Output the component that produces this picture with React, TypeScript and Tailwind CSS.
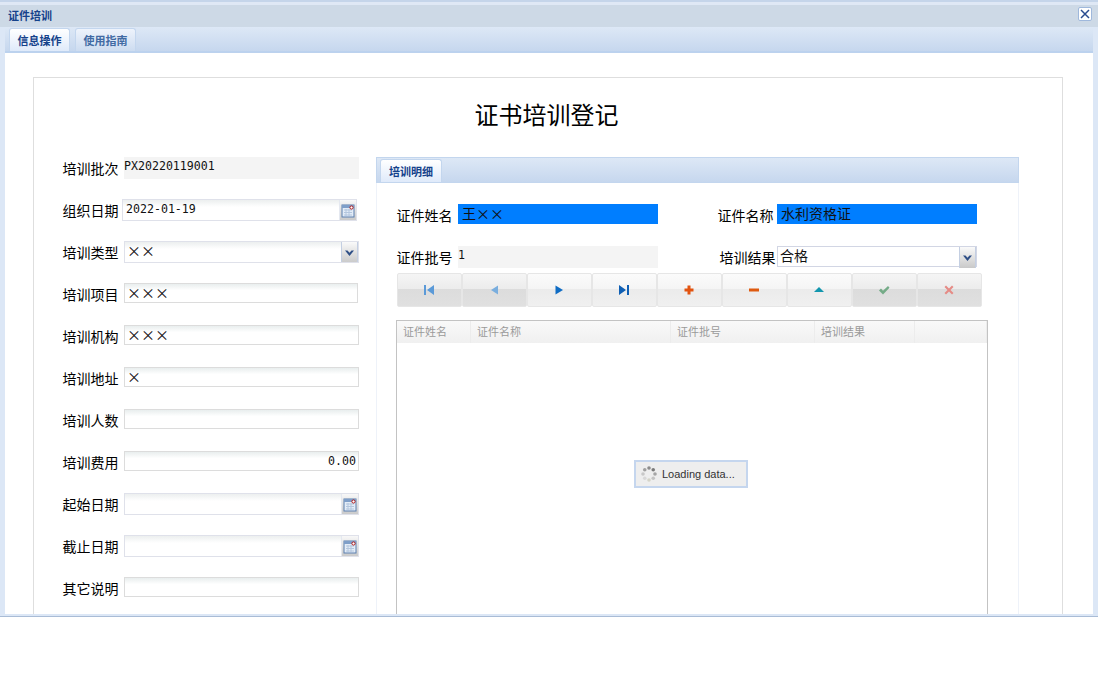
const cjk = { fontFamily: "'Noto Sans CJK SC', sans-serif" };
const mono = { fontFamily: "'DejaVu Sans Mono', 'Noto Sans CJK SC', monospace" };

function CalendarIcon() {
  return (
    <span className="flex h-[21px] w-[17px] shrink-0 items-center justify-center border-l border-[#e4e8f0] bg-gradient-to-b from-[#f8f8f8] to-[#c8c8c8]">
      <svg width="14" height="14" viewBox="0 0 14 14">
        <rect x="1" y="1" width="12" height="12" fill="#e3ecf7" stroke="#5b7fae" />
        <rect x="1" y="1" width="12" height="3" fill="#7f9fc9" />
        <path d="M3 6h8M3 8.5h8M3 11h8M5 5v7M8 5v7" stroke="#b3c6de" strokeWidth="1" />
        <circle cx="10.5" cy="3.5" r="1.6" fill="#fff" stroke="#b01818" />
      </svg>
    </span>
  );
}

function ComboArrow() {
  return (
    <span className="flex h-[21px] w-[17px] shrink-0 items-center justify-center border-x border-[#c4cfe2] bg-gradient-to-b from-[#fafafa] to-[#c9c9c9]">
      <svg width="9" height="6" viewBox="0 0 9 6">
        <path d="M0 0.5h2.5L4.5 2.8 6.5 0.5H9L4.5 6z" fill="#2f4f86" />
      </svg>
    </span>
  );
}

type Field = {
  label: string;
  value?: string;
  kind: "readonly" | "date" | "combo" | "text";
  offset?: string;
  numeric?: boolean;
  latin?: boolean;
};

const fields: Field[] = [
  { label: "培训批次", value: "PX20220119001", kind: "readonly", latin: true },
  { label: "组织日期", value: "2022-01-19", kind: "date", offset: "-ml-[2px] w-[235px]", latin: true },
  { label: "培训类型", value: "××", kind: "combo" },
  { label: "培训项目", value: "×××", kind: "text", offset: "w-[234px]" },
  { label: "培训机构", value: "×××", kind: "text" },
  { label: "培训地址", value: "×", kind: "text" },
  { label: "培训人数", kind: "text" },
  { label: "培训费用", value: "0.00", kind: "text", numeric: true, latin: true },
  { label: "起始日期", kind: "date" },
  { label: "截止日期", kind: "date" },
  { label: "其它说明", kind: "text" },
];

function FormRow({ field }: { field: Field }) {
  const { label, value, kind, offset, numeric, latin } = field;
  const box =
    kind === "readonly"
      ? "h-[22px] bg-[#f4f4f4]"
      : kind === "text"
        ? "h-[20px] border border-[#dcdcdc] bg-gradient-to-b from-[#e9eeee] to-white to-[35%]"
        : "h-[22px] border border-[#dfe1ea] bg-gradient-to-b from-[#ecefef] to-white to-[35%]";
  const text = latin
    ? `text-[11.6px] leading-[18px] ${kind === "readonly" ? "pl-0" : "pl-[3px] pr-[2px]"}`
    : "px-[2px] text-[14px] leading-[16px]";
  return (
    <div className="flex h-[42px] items-start">
      <span className="-ml-[0.5px] w-[61.5px] shrink-0 text-[14px] leading-[22px] text-black" style={cjk}>
        {label}
      </span>
      <div className={`flex ${box} ${offset ?? "w-[235px]"} overflow-hidden`}>
        <span
          className={`min-w-0 flex-1 whitespace-nowrap ${text} text-[#111] ${numeric ? "text-right" : ""}`}
          style={latin ? mono : cjk}
        >
          {value}
        </span>
        {kind === "date" && <CalendarIcon />}
        {kind === "combo" && <ComboArrow />}
      </div>
    </div>
  );
}

const toolIcons = [
  { on: false, d: "M1 1h2v10H1zM11 1v10L4 6z", fill: "#5b9ad8" },
  { on: false, d: "M10 1.5v9L3 6z", fill: "#7aaede" },
  { on: true, d: "M2.5 1.5v9L10 6z", fill: "#0f6cc4" },
  { on: true, d: "M1 1v10l7-5zM9 1h2v10H9z", fill: "#0f5fb4" },
  { on: true, d: "M4.5 1.5h3v3h3v3h-3v3h-3v-3h-3v-3h3z", fill: "#e2530f" },
  { on: true, d: "M1 4.5h10v3H1z", fill: "#de5a10" },
  { on: true, d: "M6 3l5 5H1z", fill: "#1196ae" },
  { on: false, d: "M1 6.5l2-2 2 2.2L10 2l1.5 1.8L5 10.5z", fill: "#74ab87" },
  { on: false, d: "M1.5 3L3 1.5l3 3 3-3L10.5 3l-3 3 3 3L9 10.5l-3-3-3 3L1.5 9l3-3z", fill: "#e58b86" },
];

function ToolButton({ on, d, fill }: { on: boolean; d: string; fill: string }) {
  return (
    <div
      className={`flex h-[34px] w-[65px] items-center justify-center rounded-[2px] border border-[#e6e6e6] pr-[2px] ${
        on
          ? "bg-[linear-gradient(#fbfbfb,#f4f4f4_48%,#ebebeb_48%,#f0f0f0)]"
          : "bg-[linear-gradient(#f5f5f5,#ececec_48%,#dcdcdc_48%,#e0e0e0)]"
      }`}
    >
      <svg width="12" height="12" viewBox="0 0 12 12">
        <path d={d} fill={fill} />
      </svg>
    </div>
  );
}

const columns = [
  { title: "证件姓名", w: "w-[74px]" },
  { title: "证件名称", w: "w-[200px]" },
  { title: "证件批号", w: "w-[144px]" },
  { title: "培训结果", w: "w-[100px]" },
  { title: "", w: "flex-1" },
];

function Spinner() {
  const dots = [0, 45, 90, 135, 180, 225, 270, 315];
  const shades = ["#8c8c8c", "#7a7a7a", "#a5a5a5", "#c4c4c4", "#d4d4c8", "#d8d8d8", "#c8c8c8", "#a0a0a0"];
  return (
    <svg width="16" height="16" viewBox="0 0 16 16">
      {dots.map((a, i) => (
        <circle
          key={a}
          cx={8 + 6 * Math.sin((a * Math.PI) / 180)}
          cy={8 - 6 * Math.cos((a * Math.PI) / 180)}
          r="1.8"
          fill={shades[i]}
        />
      ))}
    </svg>
  );
}

function Tab({ label, active, width }: { label: string; active?: boolean; width: string }) {
  return (
    <div
      className={`flex h-[23px] ${width} items-center justify-center rounded-t-[3px] border border-b-0 border-[#c3d6ee] text-[11px] font-bold ${
        active ? "bg-gradient-to-b from-white to-[#dfeafa] text-[#15428b]" : "bg-gradient-to-b from-[#eef3fb] to-[#cddcf0] text-[#416aa3]"
      }`}
      style={cjk}
    >
      {label}
    </div>
  );
}

export default function App() {
  return (
    <div className="h-[687px] w-[1100px] overflow-hidden bg-white" style={cjk}>
      <div className="flex h-[617px] w-[1098px] flex-col border-b border-[#a9bcd6] bg-[#dce7f6]">
        {/* window title */}
        <div className="flex h-[27px] shrink-0 items-center justify-between bg-[linear-gradient(#c5d5ea_2px,#dfe8f5_2px,#dfe8f5_5px,#cdd9e6_5px)] pl-[8px] pr-[6px] pt-[1px]">
          <span className="mt-[3px] text-[11px] font-bold text-[#15428b]">证件培训</span>
          <span className="flex h-[14px] w-[14px] items-center justify-center rounded-[2px] border border-[#9fb8dc] bg-white">
            <svg width="10" height="10" viewBox="0 0 10 10">
              <path d="M1 1l8 8M9 1l-8 8" stroke="#2a4c8f" strokeWidth="1.5" />
            </svg>
          </span>
        </div>

        <div className="flex min-h-0 flex-1 flex-col px-[5px] pb-[2px]">
          {/* top tabs */}
          <div className="flex h-[26px] shrink-0 items-end gap-[5px] border-b-2 border-[#bcd2ee] bg-gradient-to-b from-[#dde8f6] to-[#c6d7ee] pl-[4px]">
            <Tab label="信息操作" active width="w-[61px]" />
            <Tab label="使用指南" width="w-[61px]" />
          </div>

          <div className="min-h-0 flex-1 overflow-hidden bg-white px-[28px] pt-[24px]">
            <div className="h-[600px] w-[1030px] border border-[#dedede]">
              <h1 className="mt-[19px] h-[60px] pr-[3px] text-center text-[24px] font-normal leading-[34px] text-black">证书培训登记</h1>

              <div className="flex pl-[29px]">
                <div className="w-[296px] shrink-0">
                  {fields.map((f) => (
                    <FormRow key={f.label} field={f} />
                  ))}
                </div>

                {/* detail panel */}
                <div className="ml-[17px] w-[643px] shrink-0">
                  <div className="flex h-[26px] items-end border border-[#c3d6ee] bg-gradient-to-b from-[#dde8f6] to-[#c6d7ee] pl-[3px]">
                    <Tab label="培训明细" active width="w-[62px]" />
                  </div>

                  <div className="border-x border-[#eef2f9] pl-[20px] pt-[21px]">
                    <div className="flex h-[42px] items-start">
                      <span className="-ml-[0.5px] w-[61.5px] text-[14px] leading-[22px]">证件姓名</span>
                      <span className="h-[20px] w-[200px] bg-[#007eff] px-[4px] text-[14px] leading-[19px] text-[#111]">王××</span>
                      <span className="ml-[59.5px] w-[59.5px] whitespace-nowrap text-[14px] leading-[22px]">证件名称</span>
                      <span className="h-[20px] w-[200px] bg-[#007eff] px-[4px] text-[14px] leading-[19px] text-[#111]">水利资格证</span>
                    </div>

                    <div className="flex h-[27px] items-start">
                      <span className="-ml-[0.5px] w-[61.5px] text-[14px] leading-[22px]">证件批号</span>
                      <span className="h-[22px] w-[200px] bg-[#f4f4f4] text-[11.6px] leading-[18px] text-[#111]" style={mono}>1</span>
                      <span className="ml-[61.5px] w-[57.5px] whitespace-nowrap text-[14px] leading-[22px]">培训结果</span>
                      <div className="flex h-[21px] w-[200px] border border-[#d2d6e4]">
                        <span className="flex-1 px-[2px] text-[14px] leading-[17px] text-[#111]">合格</span>
                        <ComboArrow />
                      </div>
                    </div>

                    <div className="flex">
                      {toolIcons.map((t, i) => (
                        <ToolButton key={i} {...t} />
                      ))}
                    </div>

                    <div className="relative -ml-[1px] mt-[13px] h-[320px] w-[592px] border border-[#c3c3c3]">
                      <div className="flex h-[22px] bg-gradient-to-b from-[#f9f9f9] to-[#f0f0f0]">
                        {columns.map((c) => (
                          <span key={c.title} className={`${c.w} border-r border-[#ececec] pl-[6px] text-[11px] leading-[21px] text-[#9a9a9a]`}>
                            {c.title}
                          </span>
                        ))}
                      </div>
                      <div className="absolute left-[237px] top-[139px] flex h-[28px] w-[114px] items-center gap-[5px] border-2 border-[#c5d6ee] bg-[#eeeeee] pl-[5px]">
                        <Spinner />
                        <span className="mt-[1px] text-[11px] text-[#333]" style={{ fontFamily: "'Liberation Sans', sans-serif" }}>Loading data...</span>
                      </div>
                    </div>
                  </div>
                </div>
              </div>
            </div>
          </div>
        </div>
      </div>
    </div>
  );
}
